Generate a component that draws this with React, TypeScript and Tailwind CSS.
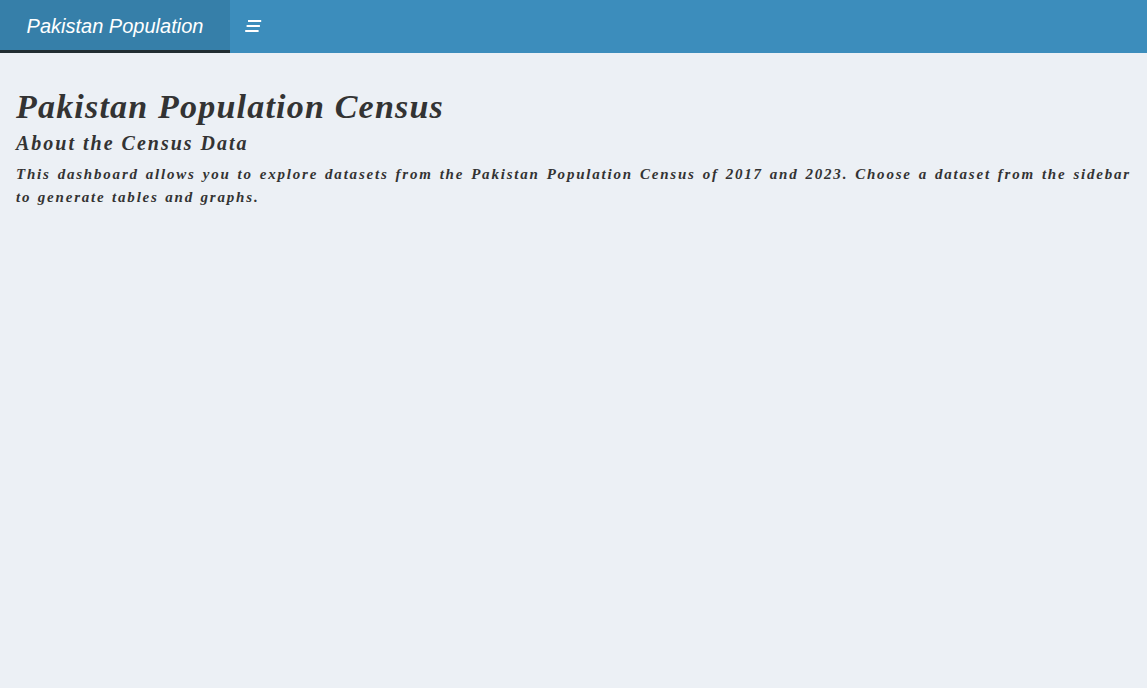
export default function App() {
  const serif = "font-['Liberation_Serif',serif] italic font-bold text-[#333]";
  return (
    <div className="min-h-screen w-full bg-[#ecf0f5]">
      <header className="flex h-[53px] bg-[#3c8dbc]">
        <div className="flex h-full w-[230px] items-center justify-center border-b-[3px] border-[#222d32] bg-[#367fa9] pt-[1px]">
          <span className="font-['Liberation_Sans',sans-serif] text-[20px] italic text-white">Pakistan Population</span>
        </div>
        <button className="flex h-[50px] w-[46px] items-start pl-[14px] pt-[19px]">
          <svg width="18" height="14" viewBox="0 0 18 14" fill="none">
            <path d="M4 2H17.2M2.6 7H15.9M1.2 12H14.6" stroke="white" strokeWidth="1.8" />
          </svg>
        </button>
      </header>
      <main className="px-[16px] pt-[34px]">
        <h1 className={`${serif} text-[34px] leading-[40px] tracking-[1.2px]`}>Pakistan Population Census</h1>
        <h3 className={`${serif} mt-[3px] text-[20px] leading-[26px] tracking-[2px]`}>About the Census Data</h3>
        <p className={`${serif} mt-[7px] text-justify text-[15px] leading-[23px] tracking-[1.8px] [word-spacing:1px]`}>
          This dashboard allows you to explore datasets from the Pakistan Population Census of 2017 and 2023. Choose a dataset from the sidebar to generate tables and graphs.
        </p>
      </main>
    </div>
  );
}
